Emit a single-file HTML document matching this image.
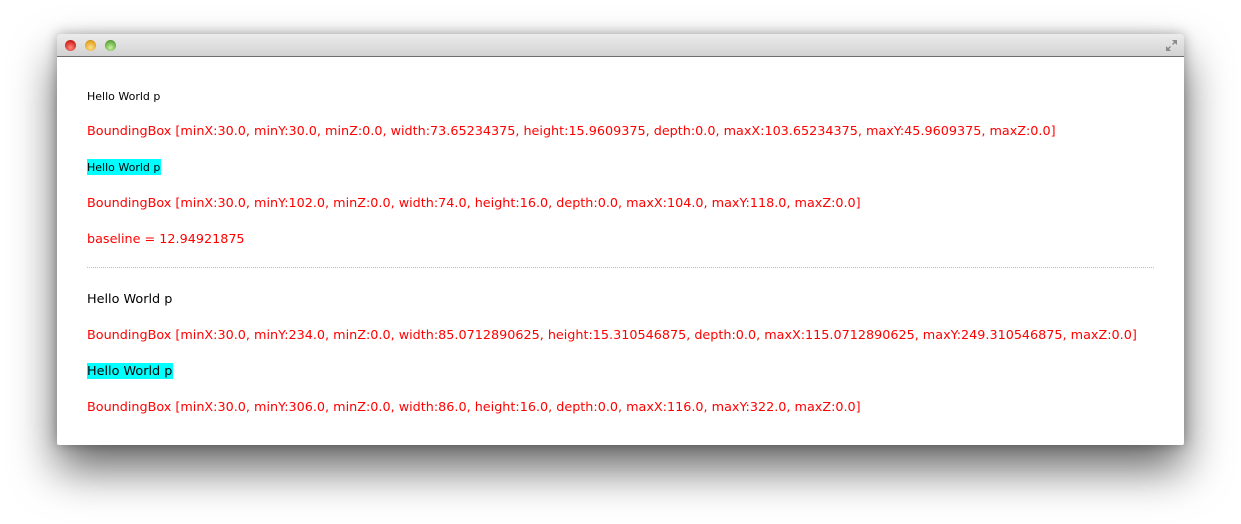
<!DOCTYPE html>
<html><head><style>
body{margin:0;width:1241px;height:524px;background:#fff;position:relative;overflow:hidden;font-family:"DejaVu Sans","Liberation Sans",sans-serif}
.win{position:absolute;left:57px;top:34px;width:1127px;height:411px;background:#fff;border-radius:4px 4px 2px 2px;box-shadow:0 24px 45px rgba(0,0,0,.6),0 0 12px rgba(0,0,0,.3)}
.tb{position:absolute;left:0;top:0;width:1127px;height:22px;border-radius:4px 4px 0 0;background:linear-gradient(#ececec,#d2d2d2);border-bottom:1px solid #6e6e6e}
.b{position:absolute;top:6px;width:11px;height:11px;border-radius:50%}
.t{position:absolute;left:30px;white-space:nowrap;line-height:16px;height:16px}
.r{color:#f00;font-size:12.78px}
</style></head><body>
<div class="win">
<div class="tb">
<div class="b" style="left:8px;background:radial-gradient(circle at 50% 70%,#ff8a80,#d0211c 70%,#8a1a16)"></div>
<div class="b" style="left:28px;background:radial-gradient(circle at 50% 70%,#ffe08a,#e0a020 70%,#9a6a10)"></div>
<div class="b" style="left:48px;background:radial-gradient(circle at 50% 70%,#c8f0a0,#5ea83a 70%,#3a6a20)"></div>
<svg style="position:absolute;right:6px;top:5px" width="13" height="13" viewBox="0 0 13 13"><path d="M7 1h5v5l-2-2-2 2-1-1 2-2zM6 12H1V7l2 2 2-2 1 1-2 2z" fill="#8a8a8a"/></svg>
</div>
<div class="t" style="top:55px;font-size:11px">Hello World p</div>
<div class="t r" style="top:90px">BoundingBox [minX:30.0, minY:30.0, minZ:0.0, width:73.65234375, height:15.9609375, depth:0.0, maxX:103.65234375, maxY:45.9609375, maxZ:0.0]</div>
<div class="t" style="top:125px;font-size:11px;background:#0ff;width:74px;line-height:18px">Hello World p</div>
<div class="t r" style="top:162px">BoundingBox [minX:30.0, minY:102.0, minZ:0.0, width:74.0, height:16.0, depth:0.0, maxX:104.0, maxY:118.0, maxZ:0.0]</div>
<div class="t r" style="top:198px">baseline = 12.94921875</div>
<div style="position:absolute;left:30px;top:233px;width:1067px;border-top:1px dotted #bbb"></div>
<div class="t" style="top:258px;font-size:12.8px">Hello World p</div>
<div class="t r" style="top:294px">BoundingBox [minX:30.0, minY:234.0, minZ:0.0, width:85.0712890625, height:15.310546875, depth:0.0, maxX:115.0712890625, maxY:249.310546875, maxZ:0.0]</div>
<div class="t" style="top:329px;font-size:12.8px;background:#0ff;width:86px;line-height:18px">Hello World p</div>
<div class="t r" style="top:366px">BoundingBox [minX:30.0, minY:306.0, minZ:0.0, width:86.0, height:16.0, depth:0.0, maxX:116.0, maxY:322.0, maxZ:0.0]</div>
</div>
</body></html>
